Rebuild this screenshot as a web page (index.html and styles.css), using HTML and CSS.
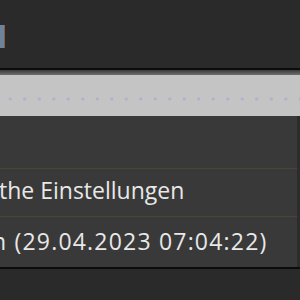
FILE: index.html
```html
<!DOCTYPE html>
<html>
<head>
<meta charset="utf-8">
<link rel="stylesheet" href="styles.css">
</head>
<body>
<div class="screen">
  <div class="top"><span class="glyph"></span></div>
  <div class="rule"></div>
  <div class="band"></div>
  <div class="selected"><div class="dots"></div></div>
  <div class="panel">
    <div class="row row-empty"></div>
    <div class="row row-text"><span class="label">the Einstellungen</span></div>
    <div class="row row-text row-last"><span class="label label-shift">n (29.04.2023 07:04:22)</span></div>
  </div>
  <div class="rule"></div>
  <div class="bottom"></div>
</div>
</body>
</html>
```
FILE: styles.css
```css
html, body {
  margin: 0;
  padding: 0;
  background: #2a2a2a;
}
.screen {
  width: 300px;
  height: 300px;
  overflow: hidden;
  display: flex;
  flex-direction: column;
  font-family: "Open Sans", "Noto Sans", sans-serif;
}
.top {
  height: 68px;
  flex: none;
  background: #2a2a2a;
  padding-top: 25px;
  box-sizing: border-box;
}
.glyph {
  display: block;
  width: 4px;
  height: 23px;
  background: #6d839b;
  border-right: 1px solid #8a5e3c;
}
.rule {
  height: 2px;
  flex: none;
  background: #0c0c0c;
}
.band {
  height: 5px;
  flex: none;
  background: linear-gradient(#3a3a3a, #6e6e6e);
}
.selected {
  height: 41px;
  flex: none;
  background: #c4c4c4;
  display: flex;
  align-items: center;
}
.dots {
  width: 100%;
  height: 4px;
  margin-top: 6px;
  background-image: radial-gradient(circle, rgba(130,140,210,0.35) 1px, transparent 2px);
  background-size: 14.5px 4px;
  background-position: 3px 0;
}
.panel {
  height: 151px;
  flex: none;
  background: #393939;
  border-right: 3px solid #2c2c2c;
  display: flex;
  flex-direction: column;
}
.row {
  flex: none;
  border-bottom: 1px solid #4a443b;
  overflow: hidden;
  white-space: nowrap;
}
.row-empty {
  height: 52px;
}
.row-text {
  height: 47px;
  color: #e8e8e8;
  font-size: 23px;
  line-height: 42px;
}
.row-last {
  border-bottom: none;
  height: 50px;
  line-height: 48px;
}
.label {
  display: inline-block;
  margin-left: -1px;
}
.label-shift {
  margin-left: -8px;
  letter-spacing: 1.2px;
}
.bottom {
  flex: 1;
  background: #2a2a2a;
}
```
